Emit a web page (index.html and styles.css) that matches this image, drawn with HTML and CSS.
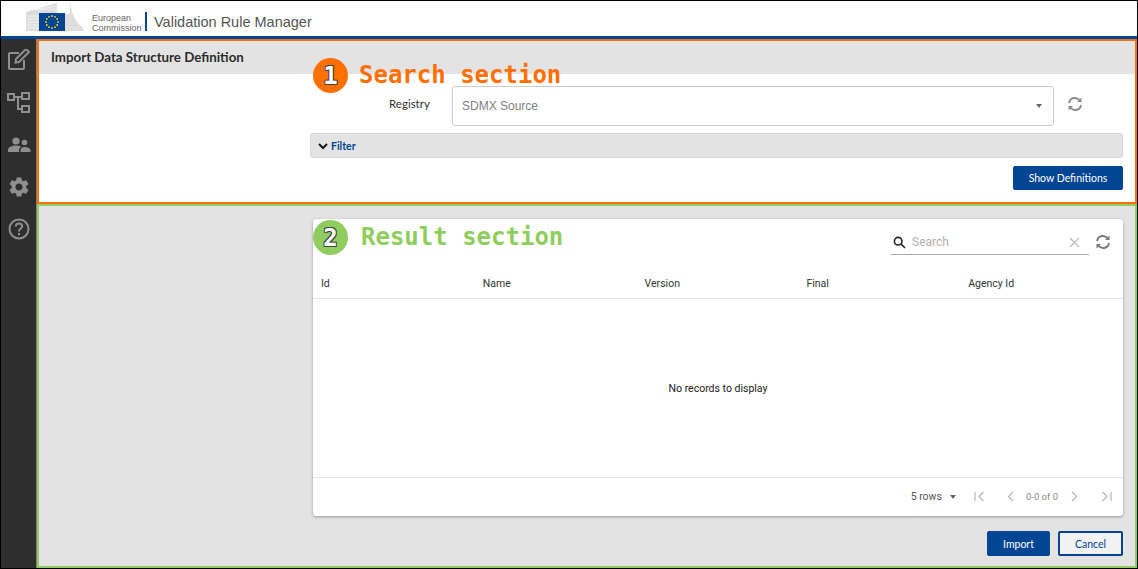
FILE: index.html
```html
<!DOCTYPE html>
<html lang="en">
<head>
  <meta charset="UTF-8" />
  <title>Validation Rule Manager</title>
  <link rel="stylesheet" href="styles.css">
</head>
<body>
  <div class="frame">
    <header class="top-bar">
      <svg class="logo" width="60" height="34" viewBox="0 0 60 34">
        <path d="M0 11 L31 2 V13 H13 V30 H0 Z" fill="#dcdcdc" />
        <path d="M1 15 H13 M1 18 H13 M1 21 H13 M1 24 H13 M1 27 H13 M2 10 L31 5 M13 9 L31 8" stroke="#f2f2f2" stroke-width="1" />
        <path d="M44 0 C45 12 50 22 57 27 V30 H39 V13 H44 Z" fill="#dedede" />
        <rect x="13" y="12" width="26" height="18" fill="#004494" />
        <g fill="#ffd617">
          <circle cx="26" cy="15" r="0.9" /><circle cx="29" cy="15.8" r="0.9" /><circle cx="31.2" cy="18" r="0.9" />
          <circle cx="32" cy="21" r="0.9" /><circle cx="31.2" cy="24" r="0.9" /><circle cx="29" cy="26.2" r="0.9" />
          <circle cx="26" cy="27" r="0.9" /><circle cx="23" cy="26.2" r="0.9" /><circle cx="20.8" cy="24" r="0.9" />
          <circle cx="20" cy="21" r="0.9" /><circle cx="20.8" cy="18" r="0.9" /><circle cx="23" cy="15.8" r="0.9" />
        </g>
      </svg>
      <div class="logo-text">European<br>Commission</div>
      <span class="logo-rule"></span>
      <span class="app-name">Validation Rule Manager</span>
    </header>

    <div class="main">
      <nav class="side-nav">
        <svg width="24" height="24" viewBox="0 2 24 24" fill="none" stroke="#8f8f8f" stroke-width="2">
          <path d="M17 13 V21 a1 1 0 0 1 -1 1 H3 a1 1 0 0 1 -1 -1 V7 a1 1 0 0 1 1 -1 H12" />
          <path d="M9 12 L19 2 L22 5 L12 15 L8.5 15.5 Z" />
        </svg>
        <svg width="24" height="24" viewBox="0 1 24 24" fill="none" stroke="#8f8f8f" stroke-width="2">
          <rect x="1" y="4" width="6" height="6" />
          <rect x="15" y="3" width="7" height="6" />
          <rect x="15" y="16" width="7" height="6" />
          <path d="M7 7 H15 M11 7 V19 H15" />
        </svg>
        <svg width="24" height="24" viewBox="0 0 24 24" fill="#8f8f8f">
          <circle cx="9" cy="8" r="3.6" />
          <circle cx="17.5" cy="9.5" r="2.8" />
          <path d="M1 19 V17 C1 14 5 12.5 9 12.5 C12 12.5 14 13.5 14 14 C12.5 15 12 16 12 17 V19 Z" />
          <path d="M13.5 19 V17.5 C13.5 15 16 14 17.5 14 C20 14 23.5 15 23.5 17.5 V19 Z" />
        </svg>
        <svg width="24" height="24" viewBox="0 0 24 24" fill="#8f8f8f">
          <path d="M19.14 12.94c.04-.3.06-.61.06-.94 0-.32-.02-.64-.07-.94l2.03-1.58c.18-.14.23-.41.12-.61l-1.92-3.32c-.12-.22-.37-.29-.59-.22l-2.39.96c-.5-.38-1.03-.7-1.62-.94l-.36-2.54c-.04-.24-.24-.41-.48-.41h-3.84c-.24 0-.43.17-.47.41l-.36 2.54c-.59.24-1.13.57-1.62.94l-2.39-.96c-.22-.08-.47 0-.59.22L2.74 8.87c-.12.21-.08.47.12.61l2.03 1.58c-.05.3-.09.63-.09.94s.02.64.07.94l-2.03 1.58c-.18.14-.23.41-.12.61l1.92 3.32c.12.22.37.29.59.22l2.39-.96c.5.38 1.03.7 1.62.94l.36 2.54c.05.24.24.41.48.41h3.84c.24 0 .44-.17.47-.41l.36-2.54c.59-.24 1.13-.56 1.62-.94l2.39.96c.22.08.47 0 .59-.22l1.92-3.32c.12-.22.07-.47-.12-.61l-2.01-1.58zM12 15.6c-1.98 0-3.6-1.62-3.6-3.6s1.62-3.6 3.6-3.6 3.6 1.62 3.6 3.6-1.62 3.6-3.6 3.6z" />
        </svg>
        <svg width="24" height="24" viewBox="0 0 24 24" fill="none" stroke="#8f8f8f" stroke-width="2">
          <circle cx="12" cy="12" r="9.5" />
          <path d="M8.8 9.5 C8.8 7.5 10.3 6.5 12 6.5 C13.8 6.5 15.2 7.7 15.2 9.3 C15.2 11.6 12 11.6 12 14.5" />
          <path d="M12 16 V18.2" />
        </svg>
      </nav>

      <div class="content">
        <section class="search-box">
          <div class="page-title">Import Data Structure Definition</div>
          <div class="search-body">
            <div class="registry-row">
              <label class="registry-label">Registry</label>
              <div class="select-box">
                <span>SDMX Source</span>
                <span class="caret"></span>
              </div>
              <svg class="reload" width="16" height="16" viewBox="0 0 16 16" fill="none" stroke="#8a8a8a" stroke-width="1.8">
                <path d="M2 7 C2.5 4 5 2 8 2 C10 2 11.6 3 12.8 4.5" />
                <path d="M14 9 C13.5 12 11 14 8 14 C6 14 4.4 13 3.2 11.5" />
                <path d="M14.5 1.5 V6 H10 Z M1.5 14.5 V10 H6 Z" fill="#8a8a8a" stroke="none" />
              </svg>
            </div>
            <div class="filter-bar">
              <svg width="10" height="7" viewBox="0 0 10 7" fill="none" stroke="#1a1a1a" stroke-width="2">
                <path d="M1 1 L5 5 L9 1" />
              </svg>
              <span>Filter</span>
            </div>
            <div class="search-actions">
              <button class="btn btn-show">Show Definitions</button>
            </div>
          </div>
          <div class="note note-search"><span class="note-num">1</span><span class="note-text">Search section</span></div>
        </section>

        <section class="result-box">
          <div class="card">
            <div class="card-tools">
              <div class="search-field">
                <svg width="13" height="13" viewBox="0 0 13 13" fill="none" stroke="#222" stroke-width="1.6">
                  <circle cx="5.2" cy="5.2" r="3.8" />
                  <path d="M8 8 L12 12" />
                </svg>
                <span class="search-hint">Search</span>
                <svg width="11" height="11" viewBox="0 0 11 11" fill="none" stroke="#bdbdbd" stroke-width="1.3">
                  <path d="M1 1 L10 10 M10 1 L1 10" />
                </svg>
              </div>
              <svg class="table-reload" width="16" height="16" viewBox="0 0 16 16" fill="none" stroke="#777" stroke-width="1.8">
                <path d="M2 7 C2.5 4 5 2 8 2 C10 2 11.6 3 12.8 4.5" />
                <path d="M14 9 C13.5 12 11 14 8 14 C6 14 4.4 13 3.2 11.5" />
                <path d="M14.5 1.5 V6 H10 Z M1.5 14.5 V10 H6 Z" fill="#777" stroke="none" />
              </svg>
            </div>
            <div class="table-head">
              <span>Id</span>
              <span>Name</span>
              <span>Version</span>
              <span>Final</span>
              <span>Agency Id</span>
            </div>
            <div class="table-empty">No records to display</div>
            <div class="table-foot">
              <span class="rows-text">5 rows</span>
              <span class="caret rows-caret"></span>
              <svg class="pager-first" width="11" height="11" viewBox="0 0 11 11" fill="none" stroke="#b5b5b5" stroke-width="1.2">
                <path d="M1 1 V10 M9.5 1 L5 5.5 L9.5 10" />
              </svg>
              <svg class="pager-prev" width="7" height="11" viewBox="0 0 7 11" fill="none" stroke="#b5b5b5" stroke-width="1.2">
                <path d="M6 1 L1.5 5.5 L6 10" />
              </svg>
              <span class="pager-text">0-0 of 0</span>
              <svg class="pager-next" width="7" height="11" viewBox="0 0 7 11" fill="none" stroke="#b5b5b5" stroke-width="1.2">
                <path d="M1 1 L5.5 5.5 L1 10" />
              </svg>
              <svg class="pager-last" width="11" height="11" viewBox="0 0 11 11" fill="none" stroke="#b5b5b5" stroke-width="1.2">
                <path d="M1.5 1 L6 5.5 L1.5 10 M10 1 V10" />
              </svg>
            </div>
          </div>
          <div class="result-actions">
            <button class="btn btn-import">Import</button>
            <button class="btn btn-cancel">Cancel</button>
          </div>
          <div class="note note-result"><span class="note-num">2</span><span class="note-text">Result section</span></div>
        </section>
      </div>
    </div>
  </div>
</body>
</html>
```

FILE: styles.css
```css
html, body {
  margin: 0;
  height: 100%;
  overflow: hidden;
}

body {
  font-family: "Liberation Sans", Arial, sans-serif;
}

.frame {
  width: 1138px;
  height: 569px;
  box-sizing: border-box;
  border: 1px solid #000;
  display: flex;
  flex-direction: column;
}

/* top bar */
.top-bar {
  height: 38px;
  box-sizing: border-box;
  border-bottom: 3px solid #004494;
  display: flex;
  align-items: flex-start;
  background: white;
}

.logo {
  margin-left: 25px;
  flex: none;
}

.logo-text {
  margin: 12px 0 0 6px;
  font-size: 9px;
  line-height: 10px;
  color: #666;
  width: 53px;
}

.logo-rule {
  width: 2px;
  height: 19px;
  margin-top: 11px;
  background: #004494;
}

.app-name {
  margin: 12px 0 0 7px;
  font-size: 14.5px;
  line-height: 19px;
  color: #555;
}

.main {
  flex: 1;
  display: flex;
  min-height: 0;
}

.side-nav {
  width: 36px;
  box-sizing: border-box;
  background: #2e2e2e;
  border-right: 1px solid #808080;
  display: flex;
  flex-direction: column;
  align-items: center;
  gap: 18px;
  padding-top: 10px;
}

.content {
  flex: 1;
  display: flex;
  flex-direction: column;
  min-width: 0;
}

/* search section */
.search-box {
  position: relative;
  height: 165px;
  box-sizing: border-box;
  border: 2px solid #ff7000;
  background: white;
}

.page-title {
  height: 33px;
  line-height: 33px;
  padding-left: 12px;
  background: #e3e3e3;
  font-family: Lato, sans-serif;
  font-weight: bold;
  font-size: 13.3px;
  color: #2b2b2b;
}

.search-body {
  margin: 0 12px 0 271px;
  padding-top: 12px;
}

.registry-row {
  display: flex;
  align-items: center;
}

.registry-label {
  width: 120px;
  margin-left: 2px;
  padding-left: 77px;
  box-sizing: border-box;
  font-family: Lato, sans-serif;
  font-size: 11.5px;
  color: #333;
  margin-top: -5px;
}

.select-box {
  width: 602px;
  height: 40px;
  box-sizing: border-box;
  margin-left: 20px;
  border: 1px solid #ccc;
  border-radius: 3px;
  display: flex;
  align-items: center;
  justify-content: space-between;
  padding: 0 11px 0 9px;
  font-size: 12px;
  color: #808080;
}

.caret {
  width: 0;
  height: 0;
  border-left: 3.5px solid transparent;
  border-right: 3.5px solid transparent;
  border-top: 4px solid #666;
}

.reload {
  margin: -4px 0 0 13px;
}

.filter-bar {
  margin-top: 7px;
  height: 25px;
  box-sizing: border-box;
  background: #e3e3e3;
  border: 1px solid #d8d8d8;
  border-radius: 3px;
  display: flex;
  align-items: center;
  gap: 3px;
  padding: 1px 0 0 7px;
  font-family: Lato, sans-serif;
  font-weight: bold;
  font-size: 10.5px;
  color: #004494;
}

.search-actions {
  display: flex;
  justify-content: flex-end;
  margin-top: 8px;
}

.btn {
  height: 24px;
  box-sizing: border-box;
  border: 1px solid #004494;
  border-radius: 2px;
  background: #004494;
  color: white;
  font-family: Lato, sans-serif;
  font-size: 10.5px;
  padding: 0;
}

.btn-show {
  width: 110px;
  padding-bottom: 1px;
}

/* result section */
.result-box {
  position: relative;
  flex: 1;
  box-sizing: border-box;
  border: 2px solid #8fce5e;
  background: #e3e3e3;
  padding: 13px 12px 10px 274px;
}

.card {
  height: 297px;
  background: white;
  border-radius: 3px;
  box-shadow: 0 1px 3px rgba(0, 0, 0, 0.35);
  display: flex;
  flex-direction: column;
  font-family: Roboto, sans-serif;
  font-size: 10.5px;
  color: #333;
}

.card-tools {
  height: 53px;
  display: flex;
  justify-content: flex-end;
  align-items: flex-start;
  gap: 6px;
  padding: 16px 12px 0 0;
  box-sizing: border-box;
}

.table-reload {
  margin-top: -1px;
}

.search-field {
  width: 198px;
  height: 20px;
  box-sizing: border-box;
  border-bottom: 1px solid #a8a8a8;
  display: flex;
  align-items: center;
  padding: 0 9px 5px 2px;
}

.search-hint {
  flex: 1;
  margin-left: 6px;
  font-size: 12px;
  color: #b0b0b0;
}

.table-head {
  height: 27px;
  box-sizing: border-box;
  border-bottom: 1px solid #e6e6e6;
  display: grid;
  grid-template-columns: repeat(5, 1fr);
  padding: 0 1px 4px 0;
  align-items: center;
}

.table-head span {
  padding-left: 8px;
}

.table-empty {
  flex: 1;
  display: flex;
  align-items: center;
  justify-content: center;
  font-size: 10.5px;
  color: #222;
}

.table-foot {
  height: 39px;
  box-sizing: border-box;
  border-top: 1px solid #e6e6e6;
  display: flex;
  align-items: center;
  justify-content: flex-end;
  padding: 0 11px 1px 0;
  color: #555;
}

.rows-caret {
  margin-left: 8px;
}

.pager-first {
  margin-left: 18px;
}

.pager-prev {
  margin-left: 22px;
}

.pager-text {
  margin-left: 12px;
  font-size: 9.5px;
  color: #8a8a8a;
}

.pager-next {
  margin-left: 13px;
}

.pager-last {
  margin-left: 23px;
}

.result-actions {
  display: flex;
  justify-content: flex-end;
  gap: 8px;
  margin-top: 15px;
}

.btn-import {
  width: 63px;
  height: 25px;
}

.btn-cancel {
  width: 65px;
  height: 25px;
  background: #f2f2f2;
  color: #004494;
  border-width: 2px;
}

/* numbered notes laid over the screenshot */
.note {
  position: absolute;
  display: flex;
  align-items: center;
  font-family: "DejaVu Sans Mono", monospace;
  font-weight: bold;
  font-size: 24px;
}

.note-num {
  width: 35px;
  height: 35px;
  border-radius: 50%;
  display: flex;
  align-items: center;
  justify-content: center;
  color: white;
  text-shadow: -1px -1px 0 #444, 1px -1px 0 #444, -1px 1px 0 #444, 1px 1px 0 #444;
}

.note-text {
  margin-top: -2px;
}

.note-search {
  left: 274px;
  top: 17px;
  color: #ff7000;
}

.note-search .note-num {
  background: #ff7000;
}

.note-search .note-text {
  margin-left: 11px;
}

.note-result {
  left: 274px;
  top: 14px;
  color: #8fce5e;
}

.note-result .note-num {
  background: #8fce5e;
}

.note-result .note-text {
  margin-left: 13px;
}
```
